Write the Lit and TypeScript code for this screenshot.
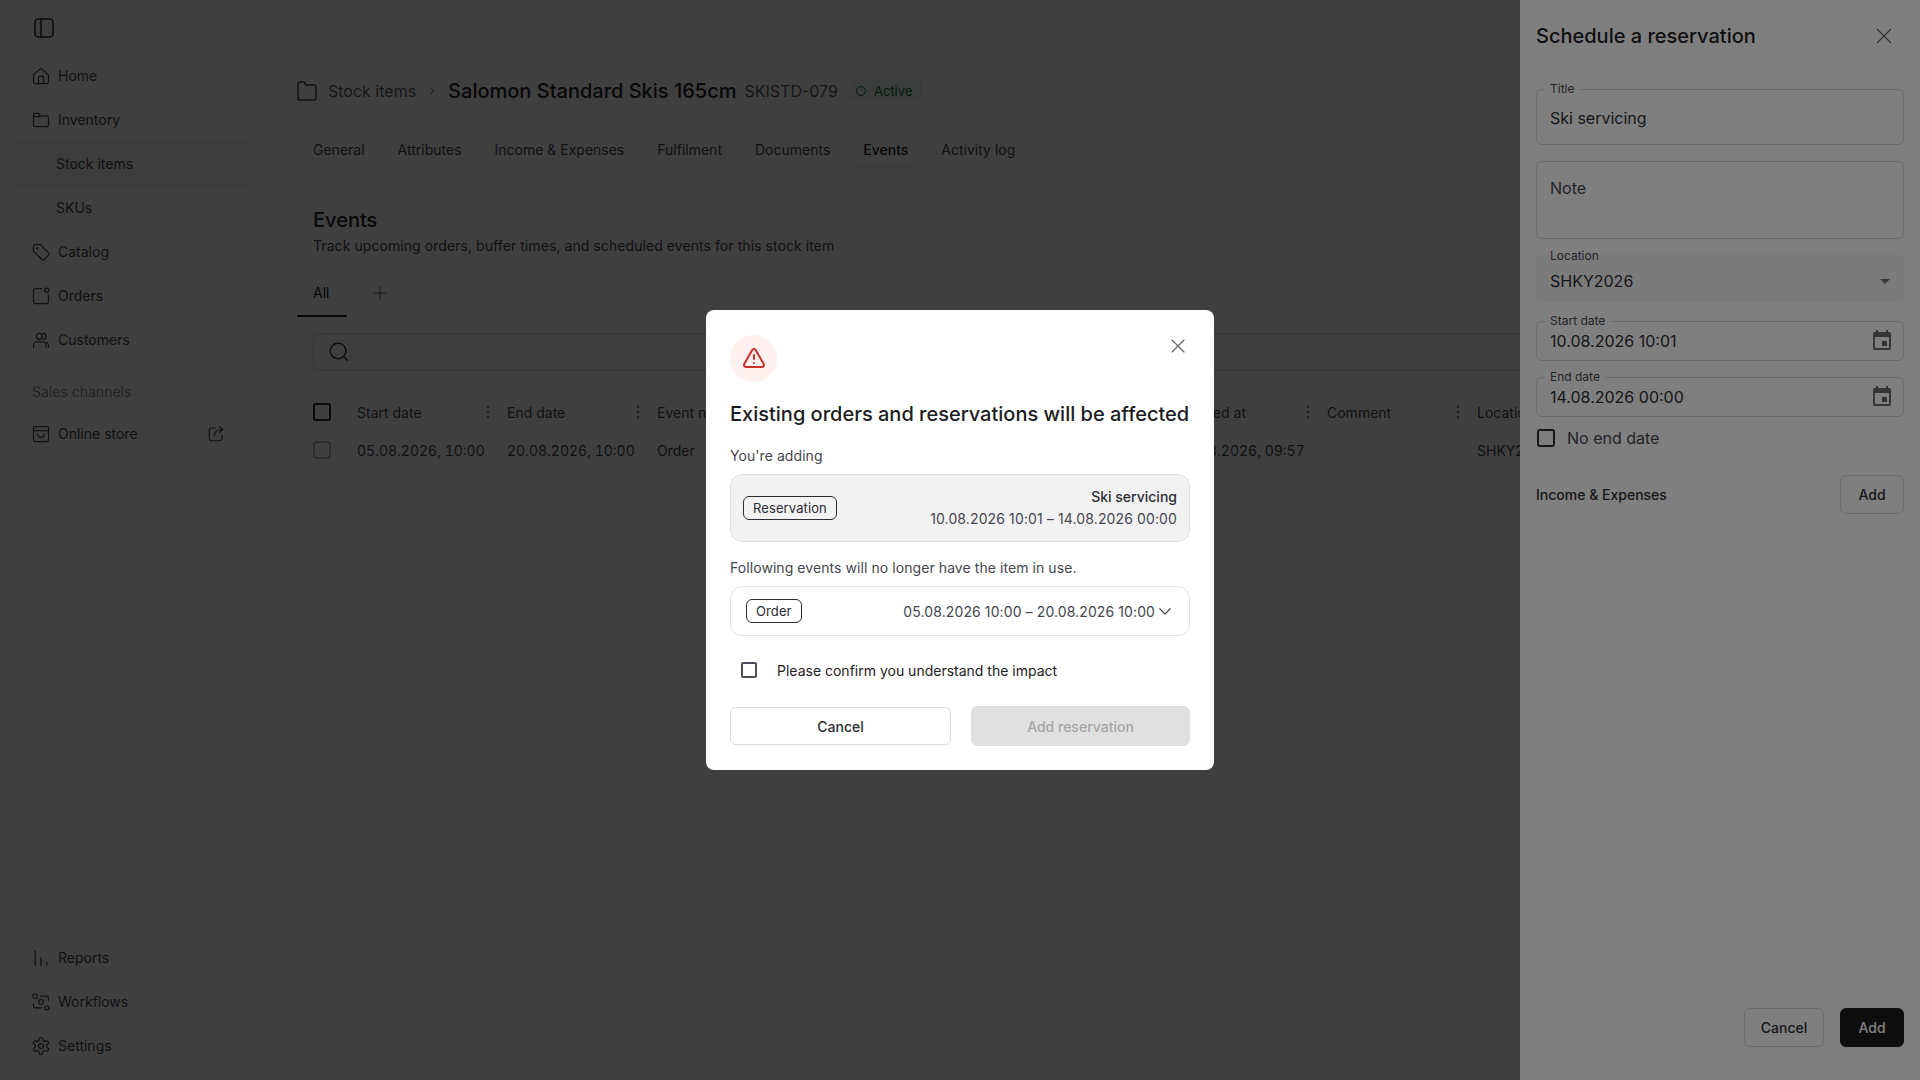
import { LitElement, html, css, svg } from "lit";
import { customElement } from "lit/decorators.js";

const ic = (body: unknown, cls = "ic", vb = "0 0 24 24") =>
  html`<svg class=${cls} viewBox=${vb} fill="none" stroke="currentColor" stroke-width="1.5" stroke-linecap="round" stroke-linejoin="round">${body}</svg>`;

const I = {
  panel: svg`<rect x="1" y="1" width="18" height="18" rx="3.5"/><path d="M7 1v18"/>`,
  home: svg`<path d="M3 10.5 12 3l9 7.5V19a2 2 0 0 1-2 2H5a2 2 0 0 1-2-2z"/><path d="M9 21v-7a2 2 0 0 1 2-2h2a2 2 0 0 1 2 2v7"/>`,
  folder: svg`<path d="M3 6a2 2 0 0 1 2-2h4l2 3h8a2 2 0 0 1 2 2v9a2 2 0 0 1-2 2H5a2 2 0 0 1-2-2z"/><path d="M3 8h8"/>`,
  crumbFolder: svg`<path d="M3 5a2 2 0 0 1 2-2h4l2 3h8a2 2 0 0 1 2 2v11a2 2 0 0 1-2 2H5a2 2 0 0 1-2-2z"/>`,
  tag: svg`<path d="M3 5a2 2 0 0 1 2-2h6l10 10a2 2 0 0 1 0 2.8l-5.2 5.2a2 2 0 0 1-2.8 0L3 11z"/><circle cx="7.5" cy="7.5" r=".6"/>`,
  orders: svg`<path d="M13 3H5a2 2 0 0 0-2 2v14a2 2 0 0 0 2 2h14a2 2 0 0 0 2-2v-8"/><circle cx="19" cy="5" r="2.4"/>`,
  users: svg`<path d="M3 21v-2a5 5 0 0 1 5-5h5a5 5 0 0 1 5 5v2"/><circle cx="10" cy="7.5" r="3.6"/><path d="M14.5 3.9a3.6 3.6 0 0 1 0 7.2M21 21v-2a5 5 0 0 0-3-4.5"/>`,
  store: svg`<path d="M4 3h16a1 1 0 0 1 1 1v15a2 2 0 0 1-2 2H5a2 2 0 0 1-2-2V4a1 1 0 0 1 1-1z"/><path d="M3 8h18"/><path d="M8 12a4 4 0 0 0 8 0"/>`,
  ext: svg`<path d="M11 4H6a3 3 0 0 0-3 3v11a3 3 0 0 0 3 3h11a3 3 0 0 0 3-3v-5"/><path d="M10 14c0-5 3-8 11-8M16.5 2 21 6l-4.5 4"/>`,
  reports: svg`<path d="M5 3v18M12 12v9M19 17v4"/>`,
  flows: svg`<rect x="2.5" y="2.5" width="5" height="5" rx="1"/><rect x="16.5" y="16.5" width="5" height="5" rx="2.5"/><rect x="9.5" y="9.5" width="5" height="5" rx="1"/><path d="M11 5h8a2 2 0 0 1 2 2v3M13 19H5a2 2 0 0 1-2-2v-3"/>`,
  gear: svg`<path d="M12.2 2h-.4a2 2 0 0 0-2 2v.2a2 2 0 0 1-1 1.7l-.4.3a2 2 0 0 1-2 0l-.2-.1a2 2 0 0 0-2.7.7l-.2.4a2 2 0 0 0 .7 2.7l.2.1a2 2 0 0 1 1 1.7v.5a2 2 0 0 1-1 1.8l-.2.1a2 2 0 0 0-.7 2.7l.2.4a2 2 0 0 0 2.7.7l.2-.1a2 2 0 0 1 2 0l.4.3a2 2 0 0 1 1 1.7v.2a2 2 0 0 0 2 2h.4a2 2 0 0 0 2-2v-.2a2 2 0 0 1 1-1.7l.4-.3a2 2 0 0 1 2 0l.2.1a2 2 0 0 0 2.7-.7l.2-.4a2 2 0 0 0-.7-2.7l-.2-.1a2 2 0 0 1-1-1.8v-.5a2 2 0 0 1 1-1.7l.2-.1a2 2 0 0 0 .7-2.7l-.2-.4a2 2 0 0 0-2.7-.7l-.2.1a2 2 0 0 1-2 0l-.4-.3a2 2 0 0 1-1-1.7V4a2 2 0 0 0-2-2z"/><circle cx="12" cy="12" r="3"/>`,
  chevR: svg`<path d="m9 6 6 6-6 6"/>`,
  chevD: svg`<path d="m5 9 7 7 7-7"/>`,
  plus: svg`<path d="M12 3v18M3 12h18"/>`,
  search: svg`<circle cx="11" cy="11" r="8.5"/><path d="m21 21-3.6-3.6"/>`,
  close: svg`<path d="M4 4l16 16M20 4 4 20"/>`,
  warn: svg`<path d="m21.73 18-8-14a2 2 0 0 0-3.48 0l-8 14A2 2 0 0 0 4 21h16a2 2 0 0 0 1.73-3"/><path d="M12 9v4"/><path d="M12 17h.01"/>`,
};

const kebab = html`<svg class="kebab" viewBox="0 0 4 14" fill="currentColor"><circle cx="2" cy="2" r="1.3"/><circle cx="2" cy="7" r="1.3"/><circle cx="2" cy="12" r="1.3"/></svg>`;
const calendar = html`<svg class="cal" viewBox="0 0 24 24" fill="currentColor"><path d="M17 12h-5v5h5v-5zM16 1v2H8V1H6v2H5c-1.11 0-1.99.9-1.99 2L3 19c0 1.1.89 2 2 2h14c1.1 0 2-.9 2-2V5c0-1.1-.9-2-2-2h-1V1h-2zm3 18H5V8h14v11z"/></svg>`;

@customElement("app-root")
export class AppRoot extends LitElement {
  static styles = css`
    :host { display: block; position: relative; width: 100vw; height: 100vh; overflow: hidden; background: #fff; font-family: Inter, "Liberation Sans", sans-serif; font-size: 14px; color: #1f2024; }
    * { box-sizing: border-box; }
    .page { display: flex; height: 100vh; }

    .sidebar { width: 265px; flex: none; display: flex; flex-direction: column; padding: 18px 8px 12px; color: #45464f; }
    .toggle { width: 20px; height: 20px; margin: 0 0 16px 26px; color: #2c2d33; }
    .toggle svg { width: 20px; height: 20px; display: block; }
    .nav { display: flex; align-items: center; gap: 7px; height: 44px; padding-left: 23px; padding-right: 32px; border-radius: 8px; line-height: 20px; }
    .nav .ic { width: 20px; height: 20px; flex: none; }
    .nav.sub { padding-left: 48px; }
    .nav.sel { background: #f1f1f1; }
    .nav .ext { width: 18px; height: 18px; margin-left: auto; flex: none; }
    .section { padding: 20px 0 10px 24px; line-height: 20px; color: #8d8e96; }
    .bottom { margin-top: auto; }

    .main { flex: 1; min-width: 0; overflow: hidden; padding: 80px 16px 0 32px; }
    .crumbs { display: flex; align-items: center; height: 22px; }
    .crumbs .folder { width: 24px; height: 24px; margin-left: -2px; margin-right: 9px; color: #45464f; }
    .crumb { font-size: 16px; color: #5c5d66; }
    .crumbs .sep { width: 14px; height: 14px; margin: 0 9px 0 9px; color: #6c6d76; }
    .name { font-size: 20px; font-weight: 500; }
    .sku { font-size: 16px; color: #5c5d66; margin-left: 8px; }
    .badge { display: flex; align-items: center; gap: 8px; height: 22px; margin-left: 11px; padding: 0 10px 0 7px; background: #e8f6ec; border-radius: 4px; color: #14702f; font-size: 13px; }
    .dot { width: 10px; height: 10px; border: 1.5px solid #14702f; border-radius: 50%; }

    .tabs { display: flex; gap: 17px; margin: 31px 0 0 8px; }
    .tab { height: 34px; padding: 0 8px 2px; display: flex; align-items: center; color: #45464f; }
    .tab.on { color: #1f2024; font-weight: 500; border-bottom: 2px solid #f3f3f3; padding-bottom: 0; }

    .content h2 { margin: 39px 0 0 16px; font-size: 20px; line-height: 28px; font-weight: 500; }
    .content p { margin: 2px 0 0 16px; line-height: 20px; color: #45464f; letter-spacing: .07px; }
    .subtabs { display: flex; align-items: center; margin-top: 13px; height: 48px; }
    .all { height: 48px; width: 50px; display: flex; align-items: center; padding-left: 16px; border-bottom: 2px solid #1f2024; }
    .add-view { width: 16px; height: 16px; margin-left: 25px; color: #6c6d76; }
    .search { height: 38px; margin: 16px 0 0 16px; border: 1px solid #d5d5d5; border-radius: 6px; display: flex; align-items: center; padding-left: 14px; }
    .search .ic { width: 22px; height: 22px; color: #2c2d33; }

    .table { margin: 22px 0 0 16px; display: grid; grid-template-columns: 34px 150px 150px 150px 150px 220px 150px 150px 150px; }
    .cell { height: 38px; display: flex; align-items: center; padding: 0 6px 0 10px; white-space: nowrap; color: #45464f; position: relative; }
    .cell.num { font-variant-numeric: tabular-nums; }
    .box-cell { padding: 0; }
    .head { border-right: 1px solid #f0f0f0; justify-content: space-between; padding-right: 6px; }
    .kebab { width: 4px; height: 14px; color: #8d8e96; }
    .box { width: 18px; height: 18px; border: 2px solid #2c2d33; border-radius: 3px; display: block; flex: none; }
    .box.light { border-color: #b8b8bc; }

    .scrim { position: absolute; inset: 0; background: rgba(0,0,0,.5); }

    .drawer { position: absolute; top: 0; right: 0; bottom: 0; width: 400px; background: #fff; display: flex; flex-direction: column; padding: 22px 16px 33px; }
    .dhead { display: flex; align-items: center; justify-content: space-between; height: 28px; }
    .dhead h3 { margin: 0; font-size: 20px; line-height: 28px; font-weight: 500; color: #1f2024; }
    .dclose { width: 20px; height: 20px; margin-right: 10px; color: #5c5d66; }
    .field { position: relative; border: 1px solid #dadada; border-radius: 6px; padding: 0 13px; display: flex; align-items: center; justify-content: space-between; font-size: 16px; color: #2c2d33; }
    .legend { position: absolute; left: 8px; top: -8px; padding: 0 5px; background: #fff; font-size: 12px; line-height: 14px; color: #45464f; }
    .f-title { margin-top: 39px; height: 56px; padding-top: 1px; }
    .f-note { margin-top: 16px; height: 78px; align-items: flex-start; padding-top: 16px; color: #45464f; line-height: 20px; }
    .f-loc { margin-top: 16px; height: 47px; border: none; background: #f6f6f6; padding-top: 5px; padding-right: 7px; padding-left: 14px; }
    .f-loc .legend { background: none; top: -6px; left: 9px; }
    .caret { width: 24px; height: 24px; color: #757575; }
    .f-date { height: 40px; padding-right: 9px; }
    .f-start { margin-top: 19px; }
    .f-end { margin-top: 16px; }
    .cal { width: 24px; height: 24px; color: #6a6a6a; margin-bottom: 1px; }
    .noend { display: flex; align-items: center; gap: 12px; margin: 12px 0 0 1px; font-size: 16px; color: #45464f; height: 18px; }
    .income { display: flex; align-items: center; justify-content: space-between; margin-top: 28px; font-weight: 500; color: #2c2d33; }
    .btn { display: flex; align-items: center; justify-content: center; border: 1px solid #dadada; border-radius: 6px; font-weight: 500; color: #2c2d33; background: #fff; }
    .b-add { width: 64px; height: 39px; }
    .foot { margin-top: auto; display: flex; justify-content: flex-end; gap: 16px; }
    .b-cancel { width: 80px; height: 39px; }
    .b-dark { width: 64px; height: 39px; background: #1c1c1c; color: #fff; border-color: #1c1c1c; }

    .dialog-wrap { position: absolute; inset: 0; display: flex; align-items: center; justify-content: center; }
    .dialog { position: relative; width: 508px; background: #fff; border-radius: 8px; padding: 25px 24px 24px; display: flex; flex-direction: column; }
    .x { position: absolute; top: 27px; left: 463px; width: 18px; height: 18px; color: #5c5d66; }
    .warn { width: 47px; height: 47px; border-radius: 50%; background: #fdf0ee; display: flex; align-items: center; justify-content: center; color: #c9302c; padding-bottom: 1px; }
    .warn svg { width: 24px; height: 24px; stroke-width: 2; }
    .dialog h1 { margin: 18px 0 0; font-size: 20px; line-height: 28px; font-weight: 500; color: #1c1d22; white-space: nowrap; }
    .lead { margin-top: 18px; line-height: 20px; color: #45464f; letter-spacing: .07px; }
    .card { margin-top: 8px; border-radius: 12px; border: 1px solid #e2e2e4; display: flex; align-items: center; justify-content: space-between; }
    .card.grey { background: #f2f2f3; height: 68px; padding: 0 12px; }
    .card.line { height: 50px; padding: 0 15px; }
    .chip { height: 24px; padding: 0 9px; border: 1px solid #2c2d33; border-radius: 6px; display: flex; align-items: center; font-size: 13px; letter-spacing: .1px; color: #2c2d33; background: #fff; }
    .grey .chip { background: transparent; }
    .rt { text-align: right; line-height: 22px; color: #45464f; letter-spacing: .12px; }
    .rt b { display: block; font-weight: 500; color: #2c2d33; letter-spacing: 0; }
    .range { display: flex; align-items: center; gap: 1px; color: #45464f; letter-spacing: .1px; }
    .range .ic { width: 18px; height: 18px; }
    .gap16 { margin-top: 16px; }
    .confirm { display: flex; align-items: center; gap: 20px; margin: 23px 0 1px 11px; height: 22px; color: #1f2024; }
    .confirm .box { width: 16px; height: 16px; border-color: #4a4d5a; border-radius: 2px; }
    .actions { display: grid; grid-template-columns: 221fr 219fr; gap: 20px; margin-top: 24px; align-items: center; }
    .a-cancel { height: 38px; }
    .a-add { height: 40px; background: #e0e0e0; border-color: #e0e0e0; color: #a6a6a6; }
  `;

  private nav(icon: unknown, label: string) {
    return html`<div class="nav">${ic(icon)}<span>${label}</span></div>`;
  }

  private headCell(label: string) {
    return html`<div class="cell head"><span>${label}</span>${kebab}</div>`;
  }

  render() {
    return html`
      <div class="page">
        <aside class="sidebar">
          <div class="toggle">${ic(I.panel, "", "0 0 20 20")}</div>
          ${this.nav(I.home, "Home")}
          ${this.nav(I.folder, "Inventory")}
          <div class="nav sub sel">Stock items</div>
          <div class="nav sub">SKUs</div>
          ${this.nav(I.tag, "Catalog")}
          ${this.nav(I.orders, "Orders")}
          ${this.nav(I.users, "Customers")}
          <div class="section">Sales channels</div>
          <div class="nav">${ic(I.store)}<span>Online store</span>${ic(I.ext, "ext")}</div>
          <div class="bottom">
            ${this.nav(I.reports, "Reports")}
            ${this.nav(I.flows, "Workflows")}
            ${this.nav(I.gear, "Settings")}
          </div>
        </aside>
        <main class="main">
          <div class="crumbs">
            ${ic(I.crumbFolder, "folder")}
            <span class="crumb">Stock items</span>
            ${ic(I.chevR, "sep")}
            <span class="name">Salomon Standard Skis 165cm</span>
            <span class="sku">SKISTD-079</span>
            <span class="badge"><i class="dot"></i>Active</span>
          </div>
          <div class="tabs">
            <div class="tab">General</div>
            <div class="tab">Attributes</div>
            <div class="tab">Income &amp; Expenses</div>
            <div class="tab">Fulfilment</div>
            <div class="tab">Documents</div>
            <div class="tab on">Events</div>
            <div class="tab">Activity log</div>
          </div>
          <section class="content">
            <h2>Events</h2>
            <p>Track upcoming orders, buffer times, and scheduled events for this stock item</p>
            <div class="subtabs">
              <div class="all">All</div>
              ${ic(I.plus, "add-view")}
            </div>
            <div class="search">${ic(I.search)}</div>
            <div class="table">
              <div class="cell box-cell"><i class="box"></i></div>
              ${this.headCell("Start date")}
              ${this.headCell("End date")}
              ${this.headCell("Event name")}
              <div class="cell"></div>
              <div class="cell"></div>
              ${this.headCell("Created at")}
              ${this.headCell("Comment")}
              ${this.headCell("Location")}
              <div class="cell box-cell"><i class="box light"></i></div>
              <div class="cell num">05.08.2026, 10:00</div>
              <div class="cell num">20.08.2026, 10:00</div>
              <div class="cell">Order</div>
              <div class="cell"></div>
              <div class="cell"></div>
              <div class="cell num">03.08.2026, 09:57</div>
              <div class="cell"></div>
              <div class="cell">SHKY2026</div>
            </div>
          </section>
        </main>
      </div>

      <div class="scrim"></div>

      <aside class="drawer">
        <div class="dhead">
          <h3>Schedule a reservation</h3>
          ${ic(I.close, "dclose")}
        </div>
        <div class="field f-title"><span class="legend">Title</span><span>Ski servicing</span></div>
        <div class="field f-note"><span>Note</span></div>
        <div class="field f-loc"><span class="legend">Location</span><span>SHKY2026</span>
          <svg class="caret" viewBox="0 0 24 24" fill="currentColor"><path d="M7 10l5 5 5-5z"/></svg>
        </div>
        <div class="field f-date f-start"><span class="legend">Start date</span><span>10.08.2026 10:01</span>${calendar}</div>
        <div class="field f-date f-end"><span class="legend">End date</span><span>14.08.2026 00:00</span>${calendar}</div>
        <div class="noend"><i class="box"></i><span>No end date</span></div>
        <div class="income"><span>Income &amp; Expenses</span><div class="btn b-add">Add</div></div>
        <div class="foot">
          <div class="btn b-cancel">Cancel</div>
          <div class="btn b-dark">Add</div>
        </div>
      </aside>

      <div class="scrim"></div>

      <div class="dialog-wrap">
        <div class="dialog">
          ${ic(I.close, "x")}
          <div class="warn">${ic(I.warn, "")}</div>
          <h1>Existing orders and reservations will be affected</h1>
          <div class="lead">You're adding</div>
          <div class="card grey">
            <span class="chip">Reservation</span>
            <div class="rt"><b>Ski servicing</b>10.08.2026 10:01 – 14.08.2026 00:00</div>
          </div>
          <div class="lead gap16">Following events will no longer have the item in use.</div>
          <div class="card line">
            <span class="chip">Order</span>
            <span class="range">05.08.2026 10:00 – 20.08.2026 10:00 ${ic(I.chevD)}</span>
          </div>
          <div class="confirm"><i class="box"></i><span>Please confirm you understand the impact</span></div>
          <div class="actions">
            <div class="btn a-cancel">Cancel</div>
            <div class="btn a-add">Add reservation</div>
          </div>
        </div>
      </div>
    `;
  }
}
